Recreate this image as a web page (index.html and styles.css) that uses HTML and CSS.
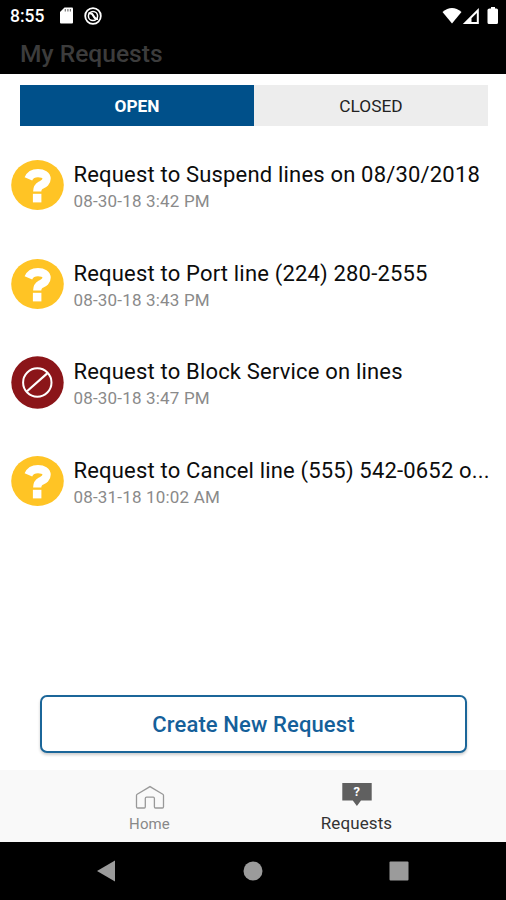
FILE: index.html
```html
<!DOCTYPE html>
<html lang="en">
  <head>
    <meta charset="UTF-8" />
    <meta name="viewport" content="width=device-width, initial-scale=1.0" />
    <title>My Requests</title>
    <link rel="stylesheet" href="styles.css">
  </head>
  <body>
    <svg class="defs" width="0" height="0">
      <symbol id="icon-question" viewBox="0 0 53 50">
        <ellipse cx="26.5" cy="25" rx="26.3" ry="25" fill="#ffc425" />
        <path d="M17.4 18.9C19 15 22.6 13.1 27 13.1C32.2 13.1 35.6 15.2 35.6 18.8C35.6 22.6 32.8 23.6 29.5 25.4C27 26.8 26.2 28.2 26.2 31.6" fill="none" stroke="#fff" stroke-width="8.2" />
        <rect x="21.9" y="33.8" width="8.5" height="8.6" fill="#fff" />
      </symbol>
      <symbol id="icon-block" viewBox="0 0 53 53">
        <circle cx="26.5" cy="26.5" r="26.2" fill="#8b1519" />
        <circle cx="26.3" cy="26.5" r="14.2" fill="none" stroke="#fff" stroke-width="2" />
        <path d="M16 35.3L36.2 17.4" stroke="#fff" stroke-width="2.2" />
      </symbol>
    </svg>

    <div class="screen">
      <header class="header">
        <div class="status-bar">
          <span class="clock">8:55</span>
          <svg class="sd-card" width="13" height="17" viewBox="0 0 13 17">
            <path d="M4.5 0.5H12Q13 0.5 13 1.5V15.5Q13 16.5 12 16.5H1Q0 16.5 0 15.5V5Z" fill="#fff" />
            <path d="M5.3 2V4.4M7.9 2V4.4M10.4 2V4.4" stroke="#777" stroke-width="1.2" />
          </svg>
          <svg class="sync" width="18" height="18" viewBox="0 0 18 18" fill="none" stroke="#fff">
            <circle cx="9" cy="9" r="7.8" stroke-width="1.8" />
            <circle cx="9" cy="9" r="4.6" stroke-width="1.5" />
            <path d="M4.5 6.5Q8 5.5 9.5 9T14 12" stroke-width="2" />
          </svg>
          <svg class="signals" width="58" height="18" viewBox="0 0 58 18" fill="#fff">
            <path d="M0.5 5Q10 -3 19.5 5L10 16.5Z" />
            <path d="M36.8 1V17H20.8Z" />
            <path d="M34.8 6V15H29.5V11.3Z" fill="#000" />
            <path d="M47.5 1.5H49V0H53V1.5H54.5Q56 1.5 56 3V15.5Q56 17 54.5 17H47Q45.5 17 45.5 15.5V3Q45.5 1.5 47.5 1.5Z" />
          </svg>
        </div>
        <h1 class="title">My Requests</h1>
      </header>

      <main class="content">
        <div class="tabs">
          <button class="tab active">OPEN</button>
          <button class="tab">CLOSED</button>
        </div>

        <ul class="requests">
          <li class="request">
            <svg class="request-icon"><use href="#icon-question" /></svg>
            <div class="request-text">
              <p class="request-name">Request to Suspend lines on 08/30/2018</p>
              <p class="request-date">08-30-18 3:42 PM</p>
            </div>
          </li>
          <li class="request">
            <svg class="request-icon"><use href="#icon-question" /></svg>
            <div class="request-text">
              <p class="request-name">Request to Port line (224) 280-2555</p>
              <p class="request-date">08-30-18 3:43 PM</p>
            </div>
          </li>
          <li class="request">
            <svg class="request-icon round"><use href="#icon-block" /></svg>
            <div class="request-text">
              <p class="request-name">Request to Block Service on lines</p>
              <p class="request-date">08-30-18 3:47 PM</p>
            </div>
          </li>
          <li class="request">
            <svg class="request-icon"><use href="#icon-question" /></svg>
            <div class="request-text">
              <p class="request-name">Request to Cancel line (555) 542-0652 o...</p>
              <p class="request-date">08-31-18 10:02 AM</p>
            </div>
          </li>
        </ul>

        <button class="create-btn">Create New Request</button>
      </main>

      <nav class="bottom-nav">
        <a class="nav-item">
          <svg width="30" height="26" viewBox="0 0 30 26" fill="none" stroke="#999" stroke-width="1.3">
            <path d="M2.2 11.2Q1.5 11.6 1.5 12.4V23.8Q1.5 25 2.7 25H9.3Q10.3 25 10.3 23.8V15.5Q10.3 14.2 11.6 14.2H18.2Q19.4 14.2 19.4 15.5V23.8Q19.4 25 20.5 25H27.3Q28.5 25 28.5 23.8V12.4Q28.5 11.6 27.8 11.2L15 3.6Z" />
          </svg>
          <span class="nav-label">Home</span>
        </a>
        <a class="nav-item current">
          <svg width="30" height="26" viewBox="0 0 30 26">
            <path d="M0.3 0H29.7V17.4H19L14.9 22.9L10.8 17.4H0.3Z" fill="#606060" />
            <text class="bubble-mark" x="14.8" y="13.3" text-anchor="middle">?</text>
          </svg>
          <span class="nav-label">Requests</span>
        </a>
      </nav>

      <div class="system-bar">
        <svg width="20" height="22" viewBox="0 0 20 22"><path d="M1 11L19 0.5V21.5Z" fill="#9b9b9b" /></svg>
        <svg width="20" height="20" viewBox="0 0 20 20"><circle cx="10" cy="10" r="9.5" fill="#9b9b9b" /></svg>
        <svg width="20" height="20" viewBox="0 0 20 20"><rect x="0.5" y="0.5" width="19" height="19" rx="1" fill="#9b9b9b" /></svg>
      </div>
    </div>
  </body>
</html>
```

FILE: styles.css
```css
* {
  box-sizing: border-box;
  margin: 0;
  padding: 0;
}

body {
  font-family: Roboto, "Liberation Sans", sans-serif;
  background: #fff;
  color: #0c0c0c;
}

svg {
  display: block;
  flex-shrink: 0;
}

button {
  font-family: inherit;
  border: none;
}

.defs {
  display: none;
}

.screen {
  display: flex;
  flex-direction: column;
  width: 506px;
  height: 900px;
}

.header {
  height: 74px;
  background: #000;
}

.status-bar {
  display: flex;
  align-items: center;
  height: 31px;
  padding: 0 6px 0 10px;
  color: #fff;
}

.clock {
  width: 50px;
  font-size: 17.5px;
  font-weight: 500;
}

.sync {
  margin-left: 11px;
}

.signals {
  margin-left: auto;
}

.title {
  padding-left: 20px;
  font-size: 24.6px;
  font-weight: 500;
  line-height: 45px;
  color: #3c3c3c;
}

.content {
  display: flex;
  flex: 1;
  flex-direction: column;
}

.tabs {
  display: flex;
  height: 41px;
  margin: 11px 18px 0 20px;
}

.tab {
  flex: 1;
  background: #ededed;
  color: #222;
  font-size: 17.3px;
  font-weight: 400;
}

.tab.active {
  background: #00508a;
  color: #fff;
  font-weight: 700;
}

.requests {
  padding-top: 10px;
  list-style: none;
}

.request {
  display: flex;
  align-items: center;
  height: 98.5px;
  padding-left: 10.5px;
}

.request-icon {
  width: 53px;
  height: 50px;
}

.request-icon.round {
  height: 53px;
}

.request-text {
  padding-top: 4px;
  margin-left: 10px;
  white-space: nowrap;
}

.request-name {
  font-size: 22px;
  line-height: 28px;
  letter-spacing: 0.18px;
}

.request-date {
  font-size: 17px;
  line-height: 24px;
  letter-spacing: 0.18px;
  color: #8a8a8a;
}

.create-btn {
  height: 58px;
  margin: auto 39px 17px 40px;
  border: 2px solid #1b6699;
  border-radius: 7px;
  background: #fff;
  box-shadow: 0 2px 3px rgba(0, 0, 0, 0.2);
  color: #15609a;
  font-size: 22px;
  font-weight: 500;
  letter-spacing: 0.12px;
}

.bottom-nav {
  display: flex;
  justify-content: center;
  height: 72px;
  padding-top: 13px;
  background: #f9f9f9;
}

.nav-item {
  display: flex;
  flex-direction: column;
  align-items: center;
  width: 207px;
  color: #888;
}

.nav-label {
  margin-top: 5px;
  font-size: 15px;
  line-height: 20px;
  letter-spacing: 0.1px;
}

.nav-item.current {
  color: #333;
}

.nav-item.current .nav-label {
  margin-top: 4px;
  font-size: 17px;
}

.bubble-mark {
  fill: #fff;
  font-size: 13px;
  font-weight: 700;
}

.system-bar {
  display: flex;
  align-items: center;
  justify-content: space-between;
  height: 58px;
  padding: 0 97px 0 96px;
  background: #000;
}
```
